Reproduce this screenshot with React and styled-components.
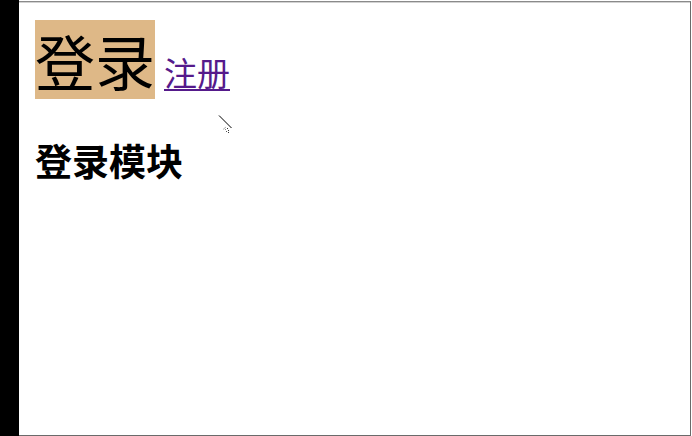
import React from "react";
import styled, { createGlobalStyle } from "styled-components";

const Global = createGlobalStyle`
  html, body { margin: 0; padding: 0; background: #ffffff; }
  body { font-family: "Noto Sans CJK SC", "Noto Sans", sans-serif; }
`;

const Frame = styled.div`
  display: flex;
  width: 692px;
  height: 436px;
  background: #ffffff;
  position: relative;
  overflow: hidden;
`;

const Sidebar = styled.div`
  width: 19px;
  flex: none;
  background: #000000;
`;

const Page = styled.main`
  flex: 1;
  margin-top: 1px;
  margin-right: 1px;
  border-top: 1px solid #8a8a8a;
  border-right: 1px solid #6a6a6a;
  border-bottom: 1px solid #6a6a6a;
  box-shadow: inset 0 1px 0 #d2d2d2;
  padding: 18px 0 0 16px;
  display: flex;
  flex-direction: column;
  align-items: flex-start;
`;

const Nav = styled.nav`
  display: flex;
  align-items: baseline;
  gap: 9px;
`;

const ActiveLink = styled.a`
  display: inline-block;
  font-family: "Noto Sans CJK SC", sans-serif;
  font-size: 60px;
  line-height: 79px;
  height: 79px;
  background: #deb887;
  color: #000000;
  text-decoration: none;
`;

const NavLink = styled.a`
  font-family: "Noto Sans CJK SC", sans-serif;
  font-size: 33px;
  line-height: 40px;
  color: #551a8b;
  text-decoration: underline;
  text-underline-offset: 3px;
  text-decoration-thickness: 2px;
`;

const Title = styled.h1`
  margin: 43px 0 0 0;
  font-family: "Noto Sans CJK SC", sans-serif;
  font-size: 37px;
  line-height: 37px;
  font-weight: 700;
  color: #000000;
`;

const Cursor = styled.svg`
  position: absolute;
  left: 218px;
  top: 114px;
  width: 16px;
  height: 22px;
`;

export default function App() {
  return (
    <>
      <Global />
      <Frame>
        <Sidebar />
        <Page>
          <Nav>
            <ActiveLink href="#login">登录</ActiveLink>
            <NavLink href="#register">注册</NavLink>
          </Nav>
          <Title>登录模块</Title>
        </Page>
        <Cursor viewBox="0 0 16 22">
          <line x1="1" y1="1.5" x2="13.5" y2="14" stroke="#000" strokeWidth="1" />
          <line x1="5" y1="15.5" x2="8" y2="13" stroke="#b0b0b0" strokeWidth="1" />
          <rect x="9" y="14" width="1" height="1" fill="#333" />
          <rect x="10" y="16" width="1" height="1" fill="#333" />
          <rect x="8" y="17" width="1" height="1" fill="#555" />
          <rect x="10" y="18" width="1" height="1" fill="#333" />
          <rect x="7" y="15" width="1" height="1" fill="#888" />
        </Cursor>
      </Frame>
    </>
  );
}
